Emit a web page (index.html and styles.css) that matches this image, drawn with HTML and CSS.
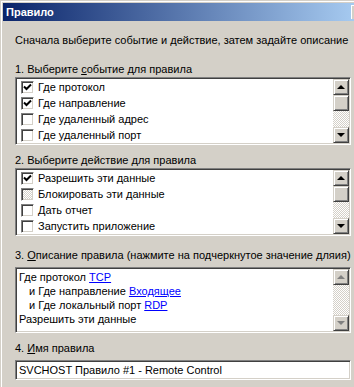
FILE: index.html
```html
<!DOCTYPE html>
<html lang="ru">
<head>
    <meta charset="UTF-8">
    <title>Правило</title>
    <link rel="stylesheet" href="styles.css">
</head>
<body>
    <div class="window">
        <div class="titlebar">
            <span class="title">Правило</span>
            <span class="title-btn"></span>
        </div>

        <div class="content">
            <p class="intro">Сначала выберите событие и действие, затем задайте описание</p>

            <!-- 1. событие -->
            <div class="label step1">1. Выберите <u>с</u>обытие для правила</div>
            <div class="listbox">
                <div class="rows">
                    <div class="row"><span class="check checked"><svg width="9" height="9" viewBox="0 0 9 9"><path d="M1 3.5 L3.5 6 L8 1.5" fill="none" stroke="#000" stroke-width="2"/></svg></span>Где протокол</div>
                    <div class="row"><span class="check checked"><svg width="9" height="9" viewBox="0 0 9 9"><path d="M1 3.5 L3.5 6 L8 1.5" fill="none" stroke="#000" stroke-width="2"/></svg></span>Где направление</div>
                    <div class="row"><span class="check"></span>Где удаленный адрес</div>
                    <div class="row"><span class="check"></span>Где удаленный порт</div>
                </div>
                <div class="scrollbar">
                    <div class="sb-btn"><span class="arrow-up"></span></div>
                    <div class="sb-btn"></div>
                    <div class="sb-track"></div>
                    <div class="sb-btn"><span class="arrow-down"></span></div>
                </div>
            </div>

            <!-- 2. действие -->
            <div class="label step2">2. Выберите действие для правила</div>
            <div class="listbox">
                <div class="rows">
                    <div class="row"><span class="check checked"><svg width="9" height="9" viewBox="0 0 9 9"><path d="M1 3.5 L3.5 6 L8 1.5" fill="none" stroke="#000" stroke-width="2"/></svg></span>Разрешить эти данные</div>
                    <div class="row"><span class="check grayed"></span>Блокировать эти данные</div>
                    <div class="row"><span class="check"></span>Дать отчет</div>
                    <div class="row"><span class="check"></span>Запустить приложение</div>
                </div>
                <div class="scrollbar">
                    <div class="sb-btn"><span class="arrow-up"></span></div>
                    <div class="sb-btn"></div>
                    <div class="sb-track"></div>
                    <div class="sb-btn"><span class="arrow-down"></span></div>
                </div>
            </div>

            <!-- 3. описание -->
            <div class="label step3">3. <u>О</u>писание правила (нажмите на подчеркнутое значение дляия)</div>
            <div class="listbox desc">
                <div class="desc-text">
                    <div>Где протокол <a href="#">TCP</a></div>
                    <div class="indent">и Где направление <a href="#">Входящее</a></div>
                    <div class="indent">и Где локальный порт <a href="#">RDP</a></div>
                    <div>Разрешить эти данные</div>
                </div>
                <div class="scrollbar">
                    <div class="sb-btn"><span class="arrow-up disabled"></span></div>
                    <div class="sb-track"></div>
                    <div class="sb-btn"><span class="arrow-down disabled"></span></div>
                </div>
            </div>

            <!-- 4. имя -->
            <div class="label step4">4. <u>И</u>мя правила</div>
            <div class="input">SVCHOST Правило #1 - Remote Control</div>
        </div>
    </div>
</body>
</html>
```

FILE: styles.css
```css
* {
    box-sizing: border-box;
}

body {
    margin: 0;
    font-family: "Liberation Sans", Arial, sans-serif;
    font-size: 11px;
    color: #000;
    background: #d4d0c8;
}

.window {
    width: 354px;
    height: 387px;
    background: #d4d0c8;
    border-top: 1px solid #d4d0c8;
    border-left: 1px solid #d4d0c8;
    box-shadow: inset 1px 1px #fff;
    padding: 2px 0 0 2px;
    overflow: hidden;
}

.titlebar {
    height: 18px;
    display: flex;
    align-items: center;
    justify-content: space-between;
    background: linear-gradient(to right, #0a246a, #a6caf0);
    padding-left: 3px;
}

.title {
    color: #fff;
    font-weight: bold;
    font-size: 11px;
}

.title-btn {
    width: 3px;
    height: 14px;
    background: #d4d0c8;
    box-shadow: inset 1px 1px #fff;
}

.content {
    padding: 0 2px 0 12px;
}

.intro {
    margin: 13px 0 0;
    height: 13px;
    line-height: 13px;
}

.label {
    height: 14px;
    line-height: 14px;
}

.step1 {
    margin-top: 15px;
}

.step2 {
    margin-top: 8px;
}

.step3 {
    margin-top: 12px;
}

.step4 {
    margin-top: 8px;
}

.label + .listbox {
    margin-top: 1px;
}

.label + .listbox.desc,
.label + .input {
    margin-top: 5px;
}

.listbox {
    display: flex;
    width: 336px;
    height: 68px;
    background: #fff;
    border: 1px solid;
    border-color: #808080 #fff #fff #808080;
    box-shadow: inset 1px 1px #404040, inset -1px -1px #d4d0c8;
    padding: 1px;
}

.listbox.desc {
    height: 66px;
}

.rows {
    flex: 1;
}

.row {
    height: 16px;
    display: flex;
    align-items: center;
    padding-left: 4px;
}

.check {
    width: 13px;
    height: 13px;
    margin-right: 4px;
    display: flex;
    align-items: center;
    justify-content: center;
    background: #fff;
    border: 1px solid;
    border-color: #808080 #fff #fff #808080;
    box-shadow: inset 1px 1px #404040, inset -1px -1px #d4d0c8;
}

.check.grayed {
    background: repeating-conic-gradient(#fff 0 25%, #d4d0c8 0 50%) 0 0/2px 2px;
}

.scrollbar {
    width: 16px;
    display: flex;
    flex-direction: column;
}

.sb-btn {
    height: 16px;
    display: flex;
    align-items: center;
    justify-content: center;
    background: #d4d0c8;
    border: 1px solid;
    border-color: #d4d0c8 #404040 #404040 #d4d0c8;
    box-shadow: inset 1px 1px #fff, inset -1px -1px #808080;
}

.sb-track {
    flex: 1;
    background: repeating-conic-gradient(#fff 0 25%, #d4d0c8 0 50%) 0 0/2px 2px;
}

.arrow-up,
.arrow-down {
    width: 0;
    height: 0;
    border-left: 4px solid transparent;
    border-right: 4px solid transparent;
}

.arrow-up {
    border-bottom: 4px solid #000;
}

.arrow-down {
    border-top: 4px solid #000;
}

.arrow-up.disabled {
    border-bottom-color: #808080;
}

.arrow-down.disabled {
    border-top-color: #808080;
}

.desc-text {
    flex: 1;
    padding: 1px 0 0 2px;
    line-height: 14px;
}

.desc-text .indent {
    padding-left: 10px;
}

.desc-text a {
    color: #0000ff;
}

.input {
    width: 336px;
    height: 20px;
    line-height: 16px;
    background: #fff;
    border: 1px solid;
    border-color: #808080 #fff #fff #808080;
    box-shadow: inset 1px 1px #404040, inset -1px -1px #d4d0c8;
    padding: 1px 3px;
}
```
